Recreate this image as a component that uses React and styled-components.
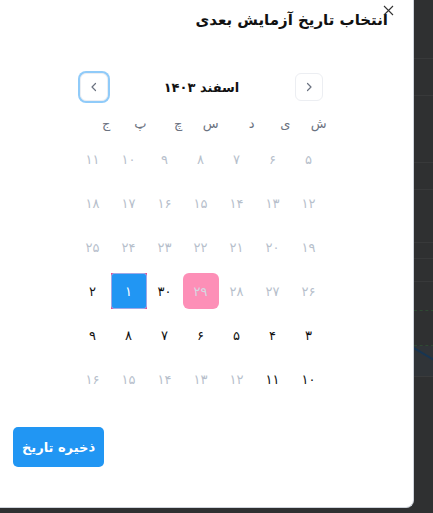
import React from 'react'
import styled, { createGlobalStyle } from 'styled-components'

const GlobalStyle = createGlobalStyle`
  html, body {
    margin: 0;
    padding: 0;
    background: #2f3031;
    font-family: "DejaVu Sans", "Noto Sans", sans-serif;
  }
`

const fa = (n) => String(n).replace(/\d/g, (d) => '۰۱۲۳۴۵۶۷۸۹'[d])

const weekdays = ['ش', 'ی', 'د', 'س', 'چ', 'پ', 'ج']

// kind: off = greyed, on = black, sel = selected, mark = pink
const days = [
  [5, 'off'], [6, 'off'], [7, 'off'], [8, 'off'], [9, 'off'], [10, 'off'], [11, 'off'],
  [12, 'off'], [13, 'off'], [14, 'off'], [15, 'off'], [16, 'off'], [17, 'off'], [18, 'off'],
  [19, 'off'], [20, 'off'], [21, 'off'], [22, 'off'], [23, 'off'], [24, 'off'], [25, 'off'],
  [26, 'off'], [27, 'off'], [28, 'off'], [29, 'mark'], [30, 'on'], [1, 'sel'], [2, 'on'],
  [3, 'on'], [4, 'on'], [5, 'on'], [6, 'on'], [7, 'on'], [8, 'on'], [9, 'on'],
  [10, 'on'], [11, 'on'], [12, 'off'], [13, 'off'], [14, 'off'], [15, 'off'], [16, 'off'],
]

const Chevron = ({ dir }) => (
  <svg width="12" height="12" viewBox="0 0 12 12" fill="none">
    <path
      d={dir === 'left' ? 'M7.5 2.5 4 6l3.5 3.5' : 'M4.5 2.5 8 6l-3.5 3.5'}
      stroke="#6b7280"
      strokeWidth="1.2"
      strokeLinecap="round"
      strokeLinejoin="round"
    />
  </svg>
)

const App = () => (
  <Page>
    <GlobalStyle />
    <Modal>
      <Close>
        <svg width="11" height="11" viewBox="0 0 11 11">
          <path d="M1 1l9 9M10 1l-9 9" stroke="#333" strokeWidth="1.1" />
        </svg>
      </Close>
      <Title>انتخاب تاریخ آزمایش بعدی</Title>
      <Calendar>
        <MonthBar>
          <NavButton focused>
            <Chevron dir="left" />
          </NavButton>
          <MonthName>اسفند {fa(1403)}</MonthName>
          <NavButton>
            <Chevron dir="right" />
          </NavButton>
        </MonthBar>
        <Weekdays>
          {weekdays.map((w) => (
            <Weekday key={w}>{w}</Weekday>
          ))}
        </Weekdays>
        <Days>
          {days.map(([n, kind], i) => (
            <Day key={i} kind={kind}>
              {kind === 'sel' ? <Selected>{fa(n)}</Selected> : fa(n)}
            </Day>
          ))}
        </Days>
      </Calendar>
      <Footer>
        <SaveButton>ذخیره تاریخ</SaveButton>
      </Footer>
    </Modal>
    <Backdrop>
      <Ghost h={58} />
      <Ghost h={36} />
      <Ghost h={66} />
      <Ghost h={26} />
      <Ghost h={52} />
      <Ghost h={15} />
      <Ghost h={22} />
      <Ghost h={28} dashed />
      <Ghost h={34} dashed />
      <Chart>
        <svg width="20" height="30" viewBox="0 0 20 30">
          <path d="M0 2 20 14" stroke="#173552" strokeWidth="2" />
        </svg>
      </Chart>
    </Backdrop>
  </Page>
)

export default App

const Page = styled.div`
  display: flex;
  width: 433px;
  height: 513px;
  overflow: hidden;
  background: #2f3031;
`

const Modal = styled.div`
  position: relative;
  flex: 0 0 414px;
  height: 508px;
  box-sizing: border-box;
  background: #fff;
  border-right: 1px solid #cfd4dc;
  border-bottom: 1px solid #cfd4dc;
  border-bottom-right-radius: 8px;
  display: flex;
  flex-direction: column;
  direction: rtl;
`

const Close = styled.div`
  position: absolute;
  top: 5px;
  left: 383px;
  width: 11px;
  height: 11px;
  display: flex;
`

const Title = styled.h2`
  margin: 0;
  padding: 7px 25px 0 0;
  font-size: 15px;
  font-weight: 700;
  line-height: 26px;
  color: #111;
`

const Calendar = styled.div`
  align-self: center;
  margin: 39px 0 0 -12px;
  width: 252px;
  display: flex;
  flex-direction: column;
  direction: ltr;
`

const MonthBar = styled.div`
  display: flex;
  align-items: center;
  justify-content: space-between;
  height: 30px;
  padding: 0 3px 0 5px;
`

const NavButton = styled.button`
  width: 28px;
  height: 28px;
  padding: 0;
  display: flex;
  align-items: center;
  justify-content: center;
  background: #fff;
  border: 1px solid #eceef2;
  border-radius: 6px;
  box-shadow: ${(p) => (p.focused ? '0 0 0 2px #90cbf9' : 'none')};
`

const MonthName = styled.span`
  font-size: 13px;
  font-weight: 700;
  color: #111;
  direction: rtl;
`

const Weekdays = styled.div`
  display: grid;
  grid-template-columns: repeat(7, 36px);
  direction: rtl;
  margin-top: 11px;
  height: 22px;
`

const Weekday = styled.span`
  text-align: right;
  padding-right: 0;
  font-size: 13px;
  line-height: 22px;
  color: #6b7280;
`

const Days = styled.div`
  display: grid;
  grid-template-columns: repeat(7, 36px);
  grid-auto-rows: 36px;
  row-gap: 8px;
  direction: rtl;
  margin-top: 6px;
`

const dayColor = { off: '#b7bfcc', on: '#111', mark: '#d4d9e2', sel: '#fff' }

const Day = styled.div`
  display: flex;
  align-items: center;
  justify-content: center;
  font-size: 13px;
  color: ${(p) => dayColor[p.kind]};
  background: ${(p) => (p.kind === 'mark' ? '#fd8fb7' : p.kind === 'sel' ? '#f0478a' : 'transparent')};
  border-radius: ${(p) => (p.kind === 'mark' ? '6px' : '0')};
`

const Selected = styled.span`
  width: 36px;
  height: 36px;
  box-sizing: border-box;
  display: flex;
  align-items: center;
  justify-content: center;
  background: #2196f3;
  border: 1px solid #9fa8e6;
  border-radius: 3px;
`

const Footer = styled.div`
  margin-top: auto;
  display: flex;
  padding: 0 13px 40px 0;
  direction: ltr;
`

const SaveButton = styled.button`
  margin-left: 13px;
  width: 91px;
  height: 40px;
  background: #2196f3;
  border: none;
  border-radius: 5px;
  color: #fff;
  font-family: "DejaVu Sans", sans-serif;
  font-size: 13px;
  font-weight: 700;
  direction: rtl;
`

const Backdrop = styled.div`
  flex: 1;
  display: flex;
  flex-direction: column;
`

const Ghost = styled.div`
  height: ${(p) => p.h}px;
  flex: 0 0 auto;
  border-bottom: 1px ${(p) => (p.dashed ? 'dashed #2f4a33' : 'solid #38393a')};
`

const Chart = styled.div`
  display: flex;
  height: 30px;
  background: #303438;
  border-bottom: 1px solid #3a3b3c;
`
